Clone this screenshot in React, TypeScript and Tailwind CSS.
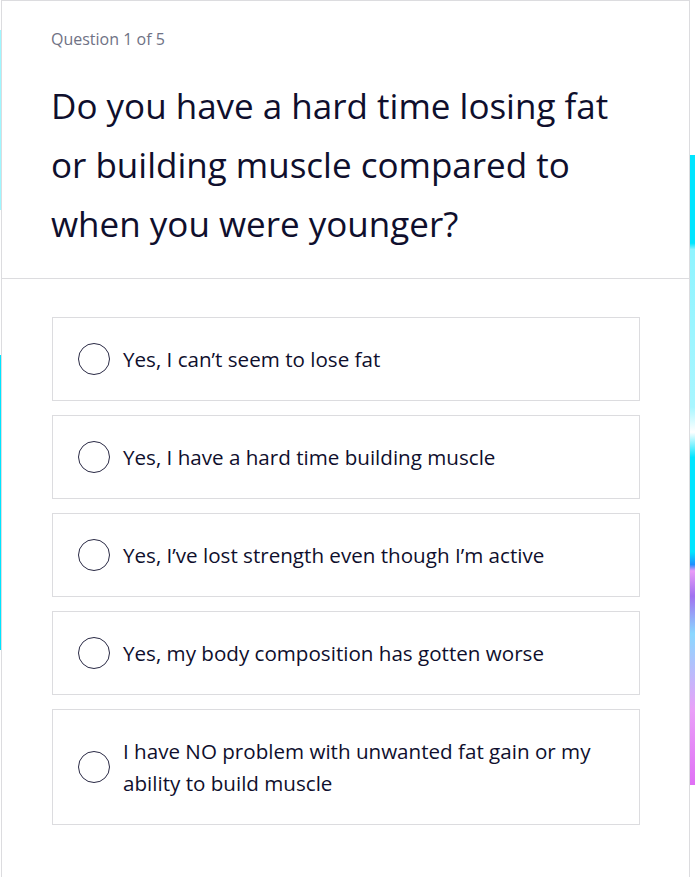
const options = [
  "Yes, I can\u2019t seem to lose fat",
  "Yes, I have a hard time building muscle",
  "Yes, I\u2019ve lost strength even though I\u2019m active",
  "Yes, my body composition has gotten worse",
  "I have NO problem with unwanted fat gain or my ability to build muscle",
];

export default function App() {
  return (
    <div className="relative h-[877px] w-[695px] overflow-hidden bg-white font-['Open_Sans',sans-serif] text-[#0f0f2d]">
      {/* background glow peeking at the edges */}
      <div className="absolute left-0 top-[30px] h-[180px] w-[2px] bg-[#9ff7ff]" />
      <div className="absolute left-0 top-[355px] h-[295px] w-[2px] bg-[#00e5ff]" />
      <div className="absolute right-0 top-[155px] h-[630px] w-[6px] bg-[linear-gradient(to_bottom,#00e5ff_0%,#00e5ff_14%,#8ff4ff_15%,#a8f6ff_40%,#ffffff_44%,#00e5ff_48%,#00e5ff_63%,#1e8fff_65%,#e99cf7_66%,#a070f0_70%,#8ad8ff_76%,#e9a0f8_88%,#e070f5_100%)]" />

      <div className="relative ml-[1px] min-h-[900px] w-[689px] border border-[#dcdcdf] bg-white">
        <div className="border-b border-[#dcdcdf] pb-[25px] pl-[49px] pr-[40px] pt-[26px]">
          <p className="text-[16px] leading-[24px] text-[#6f7285]">Question 1 of 5</p>
          <h1 className="mt-[25px] text-[35px] leading-[59px] text-[#0f0f2d]">
            Do you have a hard time losing fat or building muscle compared to when you were younger?
          </h1>
        </div>

        <div className="flex flex-col gap-[14px] pl-[50px] pr-[49px] pt-[38px]">
          {options.map((o) => (
            <div
              key={o}
              className="flex min-h-[84px] items-center gap-[13px] border border-[#dcdcdf] px-[25px] py-[25px]"
            >
              <span className="h-[32px] w-[32px] shrink-0 rounded-full border border-[#2a2a45]" />
              <span className="text-[20.6px] leading-[32px]">{o}</span>
            </div>
          ))}
        </div>
      </div>
    </div>
  );
}
